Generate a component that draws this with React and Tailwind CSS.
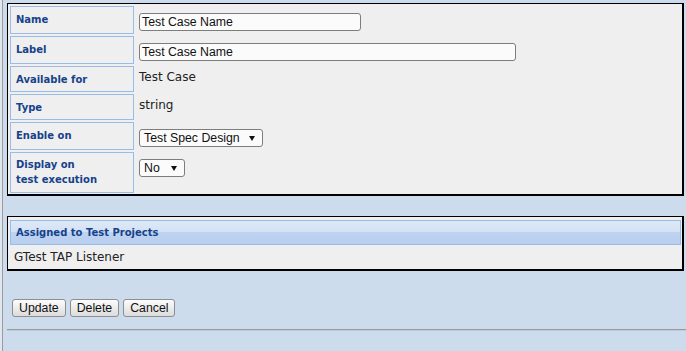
import React from "react";

const rows = [
  { label: "Name", h: "h-[28px]", kind: "input", value: "Test Case Name", w: "w-[222px]" },
  { label: "Label", h: "h-[28px]", kind: "input", value: "Test Case Name", w: "w-[377px]" },
  { label: "Available for", h: "h-[26px]", kind: "text", value: "Test Case" },
  { label: "Type", h: "h-[26px]", kind: "text", value: "string" },
  { label: "Enable on", h: "h-[28px]", kind: "select", value: "Test Spec Design", w: "w-[124px]" },
  { label: "Display on", label2: "test execution", h: "h-[41px]", kind: "select", value: "No", w: "w-[46px]" },
];

// caja del select, el nativo cambia mucho segun navegador
const FakeSelect = ({ value, w }) => (
  <div
    className={`mt-[7px] ${w} h-[18px] flex items-center justify-between pl-[4px] pr-[7px] border border-[#7d7d7d] rounded-[3px] bg-[#fbfbfb] text-[12.3px] leading-none text-[#111] font-['Liberation_Sans',sans-serif]`}
  >
    <span>{value}</span>
    <svg width="6" height="5" viewBox="0 0 6 5">
      <polygon points="0,0 6,0 3,5" fill="#111" />
    </svg>
  </div>
);

const Row = ({ row }) => (
  <div className={`flex ${row.h}`}>
    <div
      className={`w-[124px] h-full shrink-0 border border-[#99bbe8] pl-[5px] ${
        row.label2 ? "pt-[4px]" : "pt-[5px]"
      } text-[10px] leading-[15px] font-bold text-[#15428b] font-['DejaVu_Sans',sans-serif]`}
    >
      {row.label}
      {row.label2 && (
        <>
          <br />
          {row.label2}
        </>
      )}
    </div>
    <div className="ml-[5px] flex-1">
      {row.kind === "input" && (
        <input
          readOnly
          defaultValue={row.value}
          className={`mt-[7px] ${row.w} h-[18px] block border border-[#7d7d7d] rounded-[3px] bg-[#fbfbfb] px-[2px] text-[12.3px] leading-none text-[#111] font-['Liberation_Sans',sans-serif] outline-none`}
        />
      )}
      {row.kind === "text" && (
        <div className="mt-[4px] text-[12px] leading-[14px] text-[#222] font-['DejaVu_Sans',sans-serif]">
          {row.value}
        </div>
      )}
      {row.kind === "select" && <FakeSelect value={row.value} w={row.w} />}
    </div>
  </div>
);

const Btn = ({ children }) => (
  <button className="h-[18px] px-[6px] border border-[#8e8e8e] rounded-[3px] bg-gradient-to-b from-[#fcfcfc] to-[#dcdcdc] text-[12.3px] leading-none text-[#111] font-['Liberation_Sans',sans-serif]">
    {children}
  </button>
);

export default function App() {
  return (
    <div className="min-h-screen flex bg-[#cddced]">
      <div className="w-[2px] bg-[#dfe6ee]" />
      <div className="w-px bg-[#9c9c9c]" />
      <div className="flex-1 pl-[4px] pt-[3px]">
        {/* Datos del campo */}
        <div className="mr-[2px] bg-[#efefef] border-t border-l border-r-2 border-b-2 border-black pl-[2px] pt-[2px] pb-[1px]">
          <div className="flex flex-col gap-[2px]">
            {rows.map((r) => (
              <Row key={r.label} row={r} />
            ))}
          </div>
        </div>

        {/* Proyectos asignados */}
        <div className="mt-[20px] mr-[2px] bg-[#efefef] border-t border-l border-r-2 border-b-2 border-black pt-[3px]">
          <div className="ml-[2px] mr-px h-[25px] border border-[#99bbe8] bg-[linear-gradient(#dee9f7,#d3e1f4_48%,#bed3f1_50%,#b9cfef)] pl-[5px] flex items-center text-[10px] font-bold text-[#15428b] font-['DejaVu_Sans',sans-serif]">
            Assigned to Test Projects
          </div>
          <div className="pl-[6px] py-[5px] text-[12px] leading-[14px] text-[#222] font-['DejaVu_Sans',sans-serif]">
            GTest TAP Listener
          </div>
        </div>

        <div className="mt-[28px] pl-[5px] flex gap-[4px]">
          <Btn>Update</Btn>
          <Btn>Delete</Btn>
          <Btn>Cancel</Btn>
        </div>

        <div className="mt-[12px] h-[2px] border-t border-[#9a9a9a] bg-[#bfcad6]" />
      </div>
    </div>
  );
}
